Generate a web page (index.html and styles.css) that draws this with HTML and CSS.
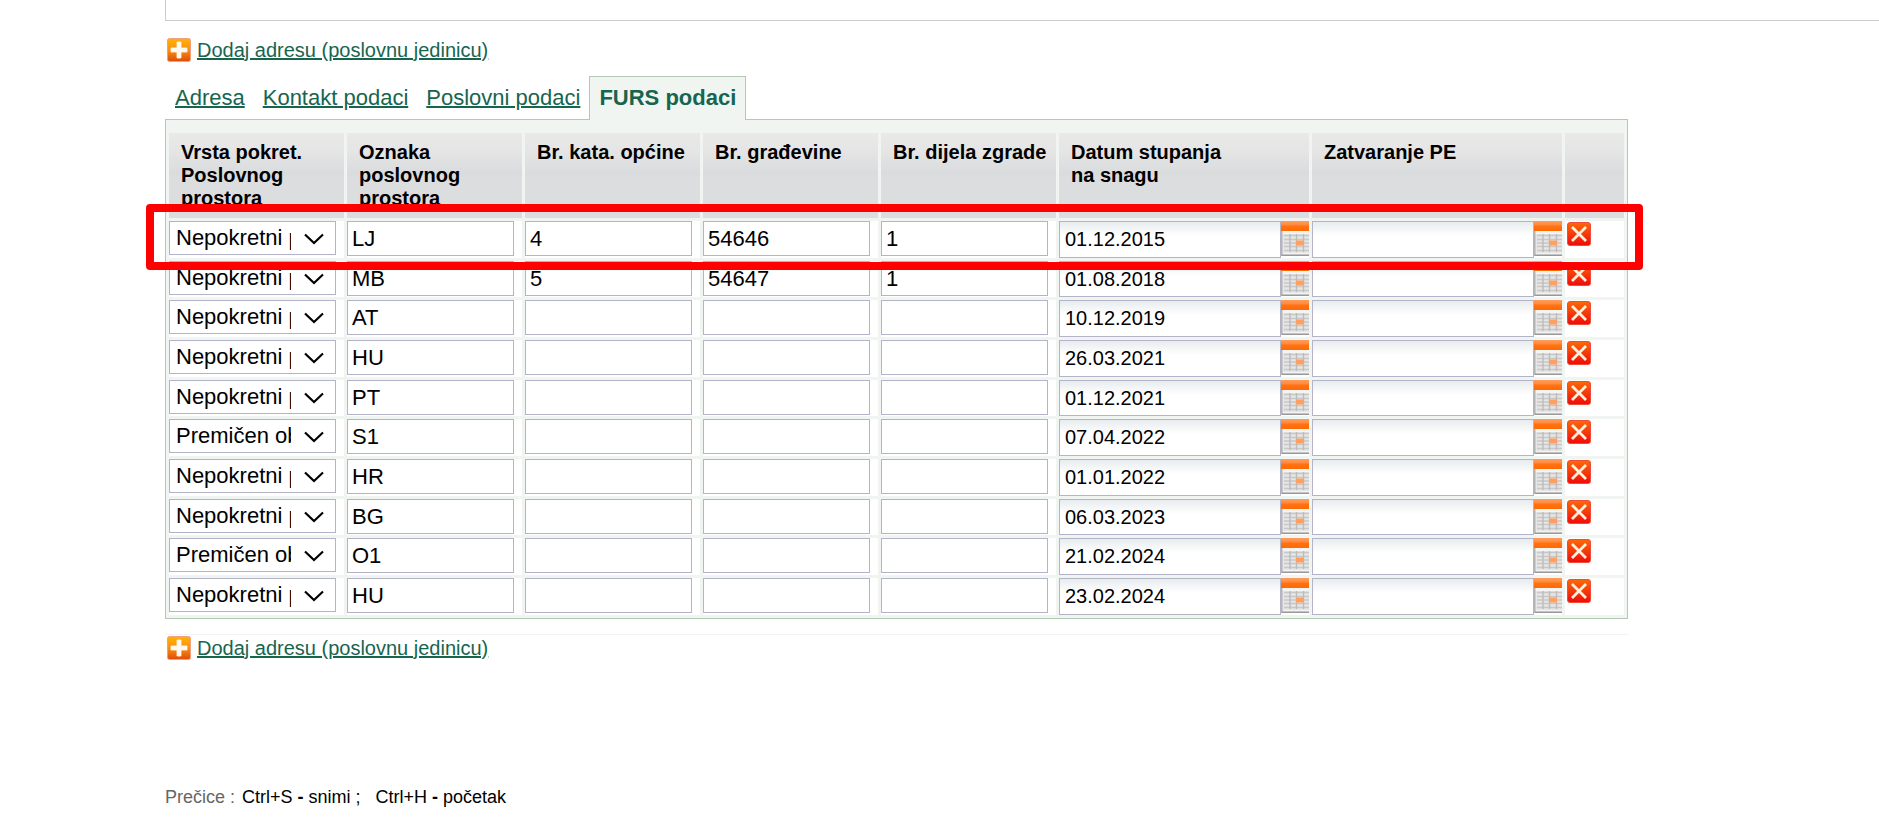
FILE: index.html
```html
<!DOCTYPE html>
<html lang="hr">
<head>
    <meta charset="UTF-8">
    <meta name="viewport" content="width=device-width, initial-scale=1.0">
    <title>FURS podaci</title>
    <link rel="stylesheet" href="styles.css">
</head>
<body>
    <!-- Icon definitions -->
    <svg class="defs" aria-hidden="true">
        <defs>
            <linearGradient id="plusFill" x1="0" y1="0" x2="0" y2="1">
                <stop offset="0" stop-color="#ffb400"/>
                <stop offset="0.5" stop-color="#f99013"/>
                <stop offset="1" stop-color="#e04a08"/>
            </linearGradient>
            <linearGradient id="crossFill" x1="0" y1="0" x2="0" y2="1">
                <stop offset="0" stop-color="#fb6a08"/>
                <stop offset="1" stop-color="#f00a0a"/>
            </linearGradient>
            <linearGradient id="calTop" x1="0" y1="0" x2="0" y2="1">
                <stop offset="0" stop-color="#ff9c5c"/>
                <stop offset="0.4" stop-color="#ff8a3c"/>
                <stop offset="0.5" stop-color="#ff7214"/>
                <stop offset="1" stop-color="#ff6a00"/>
            </linearGradient>
        </defs>
        <symbol id="icon-plus" viewBox="0 0 24 24">
            <rect x="0.5" y="0.5" width="23" height="23" rx="2" fill="url(#plusFill)" stroke="#f0a080"/>
            <path d="M10 4h4v6h6v4h-6v6h-4v-6H4v-4h6z" fill="#fff8ee" stroke="#fff8ee" stroke-width="0.8"/>
        </symbol>
        <symbol id="icon-delete" viewBox="0 0 24 24">
            <rect x="0.5" y="0.5" width="23" height="23" rx="2.5" fill="url(#crossFill)" stroke="#f04a38"/>
            <path d="M5 5l14 14M19 5L5 19" stroke="#fff0dc" stroke-width="2.8" fill="none"/>
        </symbol>
        <symbol id="icon-calendar" viewBox="0 0 28 35">
            <rect width="28" height="35" fill="#e6e6e6"/>
            <rect width="28" height="10" fill="url(#calTop)"/>
            <rect y="10" width="28" height="3" fill="#f4f4f4"/>
            <rect y="10" width="1.5" height="25" fill="#b4b4b4"/>
            <path d="M3 14.5h25M3 18.5h25M3 22h25M3 25.500h25M3 29.500h25" stroke="#c8c8c8" stroke-width="1.4"/>
            <path d="M9 13v18M15.5 13v18M22.5 13v18" stroke="#bcbcbc" stroke-width="1.4"/>
            <rect x="15" y="19.5" width="8" height="5" fill="#ffa060"/>
            <rect x="2" y="32" width="26" height="1.5" fill="#f2f2f2"/>
            <rect x="1" y="33.5" width="27" height="1.5" fill="#999"/>
        </symbol>
        <symbol id="icon-arrow" viewBox="0 0 20 12">
            <path d="M1 1.5l9 8.5 9-8.5" stroke="#000" stroke-width="2.2" fill="none"/>
        </symbol>
    </svg>

    <div class="previous-panel"></div>

    <div class="add-row">
        <svg class="icon"><use href="#icon-plus"/></svg>
        <a href="#">Dodaj adresu (poslovnu jedinicu)</a>
    </div>

    <!-- Tabs -->
    <nav class="tabs">
        <a href="#">Adresa</a>
        <a href="#">Kontakt podaci</a>
        <a href="#">Poslovni podaci</a>
        <a href="#" class="active">FURS podaci</a>
    </nav>

    <div class="content">
        <div class="panel">
            <table>
                <colgroup>
                    <col span="5" class="col-text">
                    <col span="2" class="col-date">
                    <col class="col-delete">
                </colgroup>
                <thead>
                    <tr>
                        <th>Vrsta pokret. Poslovnog prostora</th>
                        <th>Oznaka poslovnog prostora</th>
                        <th>Br. kata. općine</th>
                        <th>Br. građevine</th>
                        <th>Br. dijela zgrade</th>
                        <th>Datum stupanja<br>na snagu</th>
                        <th>Zatvaranje PE</th>
                        <th></th>
                    </tr>
                </thead>
                <tbody id="premises"></tbody>
            </table>
            <div class="highlight"></div>
        </div>

        <div class="add-row add-row-bottom">
            <svg class="icon"><use href="#icon-plus"/></svg>
            <a href="#">Dodaj adresu (poslovnu jedinicu)</a>
        </div>
    </div>

    <footer><span>Prečice :</span> Ctrl+S <b>-</b> snimi ; &nbsp; Ctrl+H <b>-</b> početak</footer>

    <script>
const types = ['Nepokretni poslovni prostor', 'Premičen objekt'];

// type, label, cadastral number, building, part of building, start date
const rows = [
    [0, 'LJ', '4', '54646', '1', '01.12.2015'],
    [0, 'MB', '5', '54647', '1', '01.08.2018'],
    [0, 'AT', '', '', '', '10.12.2019'],
    [0, 'HU', '', '', '', '26.03.2021'],
    [0, 'PT', '', '', '', '01.12.2021'],
    [1, 'S1', '', '', '', '07.04.2022'],
    [0, 'HR', '', '', '', '01.01.2022'],
    [0, 'BG', '', '', '', '06.03.2023'],
    [1, 'O1', '', '', '', '21.02.2024'],
    [0, 'HU', '', '', '', '23.02.2024']
];

const textLabels = ['Oznaka poslovnog prostora', 'Br. kata. općine', 'Br. građevine', 'Br. dijela zgrade'];

function textCell(value, label) {
    return `<td><input type="text" class="text" aria-label="${label}" value="${value}"></td>`;
}

function dateCell(value, label) {
    return `<td><div class="date">
        <input type="text" aria-label="${label}" value="${value}">
        <button type="button" aria-label="Kalendar"><svg><use href="#icon-calendar"/></svg></button>
    </div></td>`;
}

// Build the table body
document.getElementById('premises').innerHTML = rows.map(row => {
    const options = types.map((type, i) => `<option${i === row[0] ? ' selected' : ''}>${type}</option>`).join('');
    return `<tr>
        <td><div class="select">
            <select aria-label="Vrsta poslovnog prostora">${options}</select>
            <svg><use href="#icon-arrow"/></svg>
        </div></td>
        ${textLabels.map((label, i) => textCell(row[i + 1], label)).join('')}
        ${dateCell(row[5], 'Datum stupanja na snagu')}
        ${dateCell('', 'Zatvaranje PE')}
        <td><button type="button" class="delete" aria-label="Obriši"><svg class="icon"><use href="#icon-delete"/></svg></button></td>
    </tr>`;
}).join('');
    </script>
</body>
</html>
```

FILE: styles.css
```css
* {
    box-sizing: border-box;
}
body {
    margin: 0;
    padding-left: 165px;
    font-family: Arial, "Liberation Sans", sans-serif;
    font-size: 20px;
    line-height: 23px;
    color: #000;
    background-color: #fff;
}
a {
    color: #17654f;
    text-decoration-thickness: 2px;
}
.defs {
    position: absolute;
    width: 0;
    height: 0;
}
.icon {
    display: block;
    width: 24px;
    height: 24px;
}
.previous-panel {
    height: 21px;
    border: 1px solid #ccc;
    border-width: 0 0 1px 1px;
}
.add-row {
    display: flex;
    align-items: center;
    gap: 6px;
    padding: 17px 0 0 2px;
}
.tabs {
    display: flex;
    align-items: flex-end;
    margin-top: 14px;
    padding-left: 1px;
    font-size: 22px;
}
.tabs a {
    height: 43px;
    padding: 9px 9px 0;
    line-height: 25px;
}
.tabs .active {
    z-index: 1;
    height: 44px;
    margin-bottom: -1px;
    padding: 8px 9px 0;
    border: 1px solid #b4c8b4;
    border-bottom: none;
    background-color: #f1f5f2;
    font-weight: bold;
    text-decoration: none;
}
.content {
    width: max-content;
}
.panel {
    position: relative;
    padding-top: 10px;
    border: 1px solid #b4c8b4;
    background-color: #f1f5f2;
}
table {
    width: 1461px;
    table-layout: fixed;
    border-spacing: 3px;
}
.col-text {
    width: 175px;
}
.col-date {
    width: 250px;
}
th {
    height: 85px;
    padding: 8px 0 8px 12px;
    vertical-align: top;
    text-align: left;
    background: linear-gradient(#e9e9e9 0, #e5e5e5 18px, #dadbdd 41px, #dcddde 43px, #dcddde 100%);
}
th:first-child {
    padding-right: 24px;
}
td {
    height: 37px;
    padding: 0;
    vertical-align: top;
    background-color: #fff;
}
input, select {
    display: block;
    margin: 0;
    border: 1px solid #b4b4c8;
    border-radius: 0;
    background-color: #fff;
    color: #000;
    font-family: inherit;
    font-size: 22px;
}
.text {
    width: 167px;
    height: 35px;
    padding: 0 4px;
}
.select {
    position: relative;
    width: 167px;
}
.select select {
    width: 100%;
    height: 34px;
    padding: 0 44px 2px 6px;
    appearance: none;
}
.select svg {
    position: absolute;
    top: 12px;
    right: 12px;
    width: 20px;
    height: 12px;
    pointer-events: none;
}
.date {
    display: flex;
    height: 37px;
}
.date input {
    flex: 1;
    min-width: 0;
    height: 100%;
    padding: 0 5px;
    font-size: 20px;
    background: linear-gradient(#e8ecee, #fff 14px);
}
/* every third row is a pixel shorter */
tbody tr:nth-child(3n + 2) td,
tbody tr:nth-child(3n + 2) .date {
    height: 36px;
}
button {
    padding: 0;
    border: none;
    background: none;
    cursor: pointer;
}
.date svg {
    display: block;
    width: 28px;
    height: 35px;
}
.date button {
    align-self: flex-start;
}
.delete {
    display: block;
    margin: 1px 2px;
}
/* marks the first business premise */
.highlight {
    position: absolute;
    top: 84px;
    left: -20px;
    right: -16px;
    height: 66px;
    border: 8px solid #f00;
    border-radius: 4px;
    pointer-events: none;
}
.add-row-bottom {
    margin-top: 15px;
    padding-top: 1px;
    border-top: 1px solid #f3f3f3;
}
footer {
    margin-top: 126px;
    font-size: 18px;
}
footer span {
    margin-right: 2px;
    color: #666;
}
```
